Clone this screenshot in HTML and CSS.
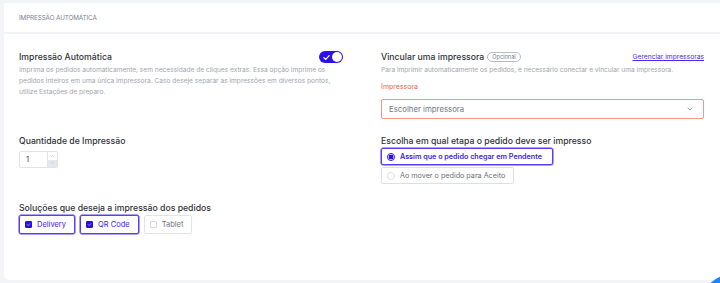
FILE: index.html
```html
<!DOCTYPE html>
<html lang="pt-BR">
<head>
<meta charset="utf-8">
<link rel="stylesheet" href="styles.css">
</head>
<body>
<div class="card">
  <div class="card-head">IMPRESSÃO AUTOMÁTICA</div>
  <div class="card-body">
    <div class="grid">
      <div class="block">
        <div class="row-title">
          <span class="title">Impressão Automática</span>
          <span class="toggle"><svg viewBox="0 0 10 10" class="tick"><path d="M2 5.2 L4.2 7.2 L8 3" fill="none" stroke="#fff" stroke-width="1.3" stroke-linecap="round" stroke-linejoin="round"/></svg><span class="knob"></span></span>
        </div>
        <p class="desc">Imprima os pedidos automaticamente, sem necessidade de cliques extras. Essa opção imprime os pedidos inteiros em uma única impressora. Caso deseje separar as impressões em diversos pontos, utilize Estações de preparo.</p>
      </div>
      <div class="block">
        <div class="row-title">
          <span class="title">Vincular uma impressora <span class="badge">Opcional</span></span>
          <a class="link">Gerenciar impressoras</a>
        </div>
        <p class="desc">Para imprimir automaticamente os pedidos, é necessário conectar e vincular uma impressora.</p>
        <div class="label-err">Impressora</div>
        <div class="select"><span>Escolher impressora</span><svg viewBox="0 0 10 10" class="chev"><path d="M3 4 L5 6 L7 4" fill="none" stroke="#8a8f98" stroke-width="0.9" stroke-linecap="round" stroke-linejoin="round"/></svg></div>
      </div>
      <div class="block">
        <div class="title">Quantidade de Impressão</div>
        <div class="number"><span class="num-val">1</span><span class="spin"><span class="up"><svg viewBox="0 0 10 6"><path d="M3.5 4 L5 2.5 L6.5 4" fill="none" stroke="#b5b9c0" stroke-width="0.7"/></svg></span><span class="down"><svg viewBox="0 0 10 6"><path d="M3.5 2 L5 3.5 L6.5 2" fill="none" stroke="#b5b9c0" stroke-width="0.7"/></svg></span></span></div>
      </div>
      <div class="block">
        <div class="title">Escolha em qual etapa o pedido deve ser impresso</div>
        <div class="radios">
          <div class="radio on"><span class="dot"></span>Assim que o pedido chegar em Pendente</div>
          <div class="radio"><span class="dot"></span>Ao mover o pedido para Aceito</div>
        </div>
      </div>
      <div class="block block-last">
        <div class="title">Soluções que deseja a impressão dos pedidos</div>
        <div class="chips">
          <div class="chip on"><span class="box"><svg viewBox="0 0 10 10"><path d="M2.5 5.2 L4.3 7 L7.6 3.4" fill="none" stroke="#fff" stroke-width="1.1" stroke-linecap="round" stroke-linejoin="round"/></svg></span>Delivery</div>
          <div class="chip on"><span class="box"><svg viewBox="0 0 10 10"><path d="M2.5 5.2 L4.3 7 L7.6 3.4" fill="none" stroke="#fff" stroke-width="1.1" stroke-linecap="round" stroke-linejoin="round"/></svg></span>QR Code</div>
          <div class="chip"><span class="box"></span>Tablet</div>
        </div>
      </div>
    </div>
  </div>
</div>
<div class="fab"></div>
</body>
</html>
```
FILE: styles.css
```css
* { box-sizing: border-box; }
html, body { margin: 0; padding: 0; }
body {
  background: #f3f4f7;
  font-family: Inter, "Noto Sans", sans-serif;
  width: 720px;
  height: 283px;
  overflow: hidden;
  padding-top: 3px;
  padding-left: 4px;
}
.card {
  background: #fff;
  width: 720px;
  height: 277px;
  border-radius: 0 0 0 5px;
}
.card-head {
  height: 31px;
  padding-left: 15px;
  display: flex;
  align-items: center;
  font-size: 6.3px;
  color: #7c818c;
  letter-spacing: -0.1px;
  border-bottom: 2px solid #f1f2f6;
}
.card-body {
  padding: 16px 12px 0 15px;
}
.grid {
  display: grid;
  grid-template-columns: 324px 323px;
  column-gap: 38px;
  row-gap: 15px;
}
.block { min-width: 0; }
.block-last { margin-top: 2px; }
.row-title {
  display: flex;
  justify-content: space-between;
  align-items: center;
  height: 14px;
}
.title {
  font-size: 8.7px;
  font-weight: 500;
  color: #2f3237;
  display: flex;
  align-items: center;
  line-height: 14px;
}
.badge {
  margin-left: 3px;
  font-size: 5.6px;
  font-weight: 400;
  color: #7a7f88;
  border: 1px solid #b9bcc3;
  border-radius: 8px;
  padding: 0 4px;
  line-height: 8px;
  height: 10px;
  display: inline-flex;
  align-items: center;
}
.link {
  font-size: 6.7px;
  color: #4a2af2;
  text-decoration: underline;
}
.toggle {
  width: 24px;
  height: 12px;
  border-radius: 6px;
  background: #2d10e8;
  position: relative;
  display: inline-block;
}
.tick {
  position: absolute;
  left: 3px;
  top: 1.5px;
  width: 9px;
  height: 9px;
}
.knob {
  position: absolute;
  right: 1px;
  top: 1px;
  width: 10px;
  height: 10px;
  border-radius: 50%;
  background: #fff;
}
.desc {
  margin: 1px 0 0;
  font-size: 6.6px;
  line-height: 11px;
  color: #a0a4ad;
}
.label-err {
  margin-top: 5px;
  font-size: 7px;
  color: #f25b4f;
  line-height: 11px;
}
.select {
  margin-top: 7px;
  height: 20px;
  border: 1px solid #f3958b;
  border-radius: 2px;
  display: flex;
  align-items: center;
  justify-content: space-between;
  padding: 0 8px 0 7px;
  font-size: 7.8px;
  color: #737882;
}
.chev { width: 10px; height: 10px; }
.number {
  margin-top: 3px;
  width: 39px;
  height: 17px;
  border: 1px solid #e1e3e8;
  border-radius: 2px;
  display: flex;
}
.num-val {
  flex: 1;
  font-size: 7.5px;
  color: #444;
  display: flex;
  align-items: center;
  padding-left: 6px;
}
.spin {
  width: 10px;
  display: flex;
  flex-direction: column;
  border-left: 1px solid #e1e3e8;
}
.spin .up, .spin .down { flex: 1; display: flex; align-items: center; justify-content: center; }
.spin .down { background: #e4e7ee; }
.spin svg { width: 10px; height: 6px; }
.radios {
  margin-top: 0;
  display: flex;
  flex-direction: column;
  align-items: flex-start;
  gap: 2px;
}
.radio {
  height: 17px;
  border: 1px solid #dedfe4;
  border-radius: 2px;
  display: flex;
  align-items: center;
  padding: 0 8px 0 5px;
  font-size: 7.2px;
  color: #6b7079;
}
.radio.on {
  border-color: #5a3cf5;
  color: #3b1ee6;
  font-weight: 600;
  padding-right: 10px;
  box-shadow: 0 0 0 0.5px #5a3cf5;
}
.dot {
  width: 8px;
  height: 8px;
  border-radius: 50%;
  border: 1px solid #dcdee3;
  margin-right: 5px;
  flex: none;
}
.radio.on .dot {
  border-color: #2d10e8;
  background: radial-gradient(circle, #2d10e8 0 2.2px, #fff 2.6px);
}
.chips {
  margin-top: 0;
  display: flex;
  gap: 5px;
}
.chip {
  height: 19px;
  border: 1px solid #e2e3e8;
  border-radius: 2px;
  display: flex;
  align-items: center;
  padding: 0 8px 0 5px;
  font-size: 7.5px;
  color: #70747d;
}
.chip.on {
  border-color: #5a3cf5;
  color: #4323ef;
  box-shadow: 0 0 0 0.5px #5a3cf5;
}
.box {
  width: 7px;
  height: 7px;
  border: 1px solid #d6d8de;
  border-radius: 1px;
  margin-right: 5px;
  display: flex;
  align-items: center;
  justify-content: center;
}
.chip.on .box { background: #2a0fe0; border-color: #2a0fe0; }
.box svg { width: 7px; height: 7px; }
.fab {
  position: fixed;
  left: 704px;
  top: 275px;
  width: 50px;
  height: 50px;
  border-radius: 50%;
  background: #1b86ff;
}
```
